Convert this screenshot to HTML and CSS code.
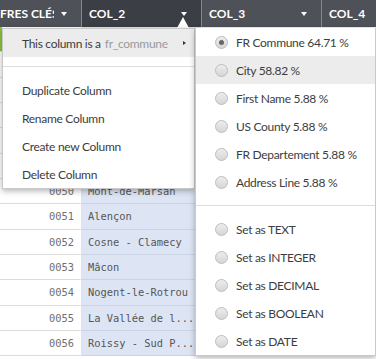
FILE: index.html
```html
<!DOCTYPE html>
<html lang="fr">
<head>
    <meta charset="UTF-8" />
    <title>Colonnes</title>
    <link rel="stylesheet" href="styles.css">
</head>
<body>
<div class="grid">
    <div class="head">
        <div class="hcell"><span class="htxt clip">FRES CLÉS</span><i class="caret"></i></div>
        <div class="hcell active"><span class="htxt">COL_2</span><i class="caret"></i></div>
        <div class="hcell"><span class="htxt">COL_3</span><i class="caret"></i></div>
        <div class="hcell"><span class="htxt">COL_4</span></div>
    </div>
    <div class="row mark"><div class="idx">0044</div><div class="val">Dax</div><div class="cell"></div><div class="cell"></div></div>
    <div class="row"><div class="idx">0045</div><div class="val">Bayonne</div><div class="cell"></div><div class="cell"></div></div>
    <div class="row"><div class="idx">0046</div><div class="val">Pau</div><div class="cell"></div><div class="cell"></div></div>
    <div class="row"><div class="idx">0047</div><div class="val">Tarbes</div><div class="cell"></div><div class="cell"></div></div>
    <div class="row"><div class="idx">0048</div><div class="val">Auch</div><div class="cell"></div><div class="cell"></div></div>
    <div class="row"><div class="idx">0049</div><div class="val">Agen</div><div class="cell"></div><div class="cell"></div></div>
    <div class="row"><div class="idx">0050</div><div class="val">Mont-de-Marsan</div><div class="cell"></div><div class="cell"></div></div>
    <div class="row"><div class="idx">0051</div><div class="val">Alençon</div><div class="cell"></div><div class="cell"></div></div>
    <div class="row"><div class="idx">0052</div><div class="val">Cosne - Clamecy</div><div class="cell"></div><div class="cell"></div></div>
    <div class="row"><div class="idx">0053</div><div class="val">Mâcon</div><div class="cell"></div><div class="cell"></div></div>
    <div class="row"><div class="idx">0054</div><div class="val">Nogent-le-Rotrou</div><div class="cell"></div><div class="cell"></div></div>
    <div class="row"><div class="idx">0055</div><div class="val">La Vallée de l...</div><div class="cell"></div><div class="cell"></div></div>
    <div class="row"><div class="idx">0056</div><div class="val">Roissy - Sud P...</div><div class="cell"></div><div class="cell"></div></div>
</div>

<i class="pointer"></i>

<ul class="menu menu-left">
    <li class="item hover">This column is a <span class="muted">fr_commune</span><i class="arrow"></i></li>
    <li class="sep"></li>
    <li class="item">Duplicate Column</li>
    <li class="item">Rename Column</li>
    <li class="item">Create new Column</li>
    <li class="item">Delete Column</li>
</ul>

<ul class="menu menu-right">
    <li class="item"><i class="radio checked"></i>FR Commune 64.71 %</li>
    <li class="item hover"><i class="radio"></i>City 58.82 %</li>
    <li class="item"><i class="radio"></i>First Name 5.88 %</li>
    <li class="item"><i class="radio"></i>US County 5.88 %</li>
    <li class="item"><i class="radio"></i>FR Departement 5.88 %</li>
    <li class="item"><i class="radio"></i>Address Line 5.88 %</li>
    <li class="sep"></li>
    <li class="item"><i class="radio"></i>Set as TEXT</li>
    <li class="item"><i class="radio"></i>Set as INTEGER</li>
    <li class="item"><i class="radio"></i>Set as DECIMAL</li>
    <li class="item"><i class="radio"></i>Set as BOOLEAN</li>
    <li class="item"><i class="radio"></i>Set as DATE</li>
</ul>
</body>
</html>
```

FILE: styles.css
```css
body {
  margin: 0;
  font-family: Lato, "Open Sans", sans-serif;
  background: #fff;
  overflow: hidden;
}

.grid {
  width: 376px;
}

.head, .row {
  display: grid;
  grid-template-columns: 82px 120px 120px 1fr;
}

.head {
  height: 27px;
  background: #4e5158;
}

.hcell {
  display: flex;
  align-items: center;
  justify-content: space-between;
  padding: 0 14px 0 7px;
  border-right: 1px solid #85878c;
  color: #fff;
  font-weight: bold;
  font-size: 12px;
}

.hcell:first-child {
  padding-left: 0;
}

.hcell.active {
  background: #3b3e45;
}

.htxt.clip {
  width: 54px;
  overflow: hidden;
  white-space: nowrap;
}

.caret {
  border-left: 3px solid transparent;
  border-right: 3px solid transparent;
  border-top: 4px solid #fff;
}

.row {
  height: 25.33px;
  font-family: "DejaVu Sans Mono", monospace;
  font-size: 10.4px;
}

.idx, .val, .cell {
  display: flex;
  align-items: center;
  border-bottom: 1px solid #dcdcdc;
  white-space: nowrap;
  overflow: hidden;
}

.idx {
  justify-content: flex-end;
  padding-right: 7px;
  color: #6f6f6f;
  border-right: 1px solid #e2e2e2;
}

.val {
  padding-left: 6px;
  background: #dde5f5;
  color: #555;
  border-bottom-color: #cbd4e4;
}

.cell {
  background: #f3f3f3;
}

.mark .idx {
  box-shadow: inset 2px 0 #8cc43c;
}

.pointer {
  position: absolute;
  left: 177px;
  top: 17px;
  border-left: 6px solid transparent;
  border-right: 6px solid transparent;
  border-bottom: 11px solid #fff;
}

.menu {
  position: absolute;
  top: 28px;
  margin: 0;
  padding: 0;
  list-style: none;
  background: #fff;
  border: 1px solid #c9c9c9;
  box-shadow: 0 2px 6px rgba(0, 0, 0, 0.3);
  font-size: 12px;
  letter-spacing: -0.3px;
  color: #3d3d3d;
}

.menu-left {
  left: 2px;
  width: 191px;
}

.menu-right {
  left: 195px;
  width: 179px;
  border-top: none;
}

.item {
  display: flex;
  align-items: center;
  height: 28px;
  white-space: nowrap;
}

.menu-left .item {
  padding-left: 19px;
}

.menu-right .item {
  padding-left: 19px;
}

.item.hover {
  background: #ececec;
}

.muted {
  color: #9a9a9a;
  margin-left: 4px;
}

.arrow {
  margin-left: auto;
  margin-right: 8px;
  border-top: 2px solid transparent;
  border-bottom: 2px solid transparent;
  border-left: 3px solid #333;
}

.sep {
  height: 1px;
  margin: 9px 0;
  background: #dedede;
}

.radio {
  width: 11px;
  height: 11px;
  margin-right: 8px;
  border: 1px solid #bdbdbd;
  border-radius: 50%;
  background: linear-gradient(#ededed, #d6d6d6);
  box-sizing: content-box;
  position: relative;
}

.radio.checked::after {
  content: "";
  position: absolute;
  left: 3px;
  top: 3px;
  width: 5px;
  height: 5px;
  border-radius: 50%;
  background: #666;
}
```
